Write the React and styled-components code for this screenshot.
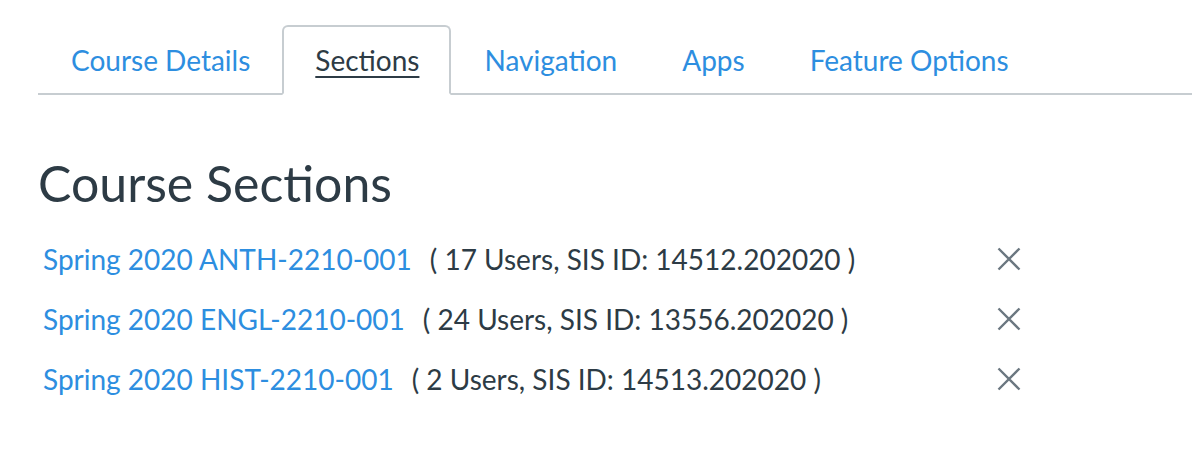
import React from "react";
import styled, { createGlobalStyle } from "styled-components";

const GlobalStyle = createGlobalStyle`
  body {
    margin: 0;
    background: #fff;
    font-family: Lato, "Noto Sans", sans-serif;
  }
`;

const Page = styled.div`
  padding: 25px 0 0 38px;
`;

const TabList = styled.ul`
  display: flex;
  list-style: none;
  margin: 0;
  padding: 0;
  border-bottom: 2px solid #c7cdd1;
`;

const Tab = styled.li`
  height: 70px;
  display: flex;
  align-items: center;
  padding: 0 30px 0 31px;
  margin-bottom: -2px;
  font-size: 28px;
  color: ${(p) => (p.$active ? "#2d3b45" : "#2d8ee0")};
  text-decoration: ${(p) => (p.$active ? "underline" : "none")};
  text-underline-offset: 5px;
  text-decoration-thickness: 2px;
  border: 2px solid ${(p) => (p.$active ? "#c7cdd1" : "transparent")};
  border-bottom-color: ${(p) => (p.$active ? "#fff" : "transparent")};
  border-radius: 6px 6px 0 0;
  background: ${(p) => (p.$active ? "#fff" : "transparent")};
  box-sizing: border-box;
`;

const Heading = styled.h1`
  margin: 58px 0 0;
  font-size: 50px;
  font-weight: 400;
  color: #2d3b45;
  line-height: 1.2;
`;

const SectionList = styled.ul`
  list-style: none;
  margin: 16px 0 0;
  padding: 0 0 0 5px;
  width: 978px;
`;

const Row = styled.li`
  display: flex;
  align-items: center;
  height: 60px;
  font-size: 28px;
`;

const SectionLink = styled.a`
  color: #2d8ee0;
  text-decoration: none;
`;

const Meta = styled.span`
  color: #2d3b45;
  margin-left: 18px;
  flex: 1;
`;

const RemoveButton = styled.button`
  border: none;
  background: none;
  padding: 0;
  display: flex;
  color: #6b7780;
  cursor: pointer;
`;

const sections = [
  { name: "Spring 2020 ANTH-2210-001", users: 17, sis: "14512.202020" },
  { name: "Spring 2020 ENGL-2210-001", users: 24, sis: "13556.202020" },
  { name: "Spring 2020 HIST-2210-001", users: 2, sis: "14513.202020" },
];

const tabs = ["Course Details", "Sections", "Navigation", "Apps", "Feature Options"];

const CloseIcon = () => (
  <svg width="24" height="24" viewBox="0 0 24 24" fill="none">
    <path d="M1.5 1.5L22.5 22.5M22.5 1.5L1.5 22.5" stroke="currentColor" strokeWidth="2.4" />
  </svg>
);

export default function App() {
  return (
    <Page>
      <GlobalStyle />
      <TabList>
        {tabs.map((t) => (
          <Tab key={t} $active={t === "Sections"}>
            {t}
          </Tab>
        ))}
      </TabList>
      <Heading>Course Sections</Heading>
      <SectionList>
        {sections.map((s) => (
          <Row key={s.name}>
            <SectionLink href="#">{s.name}</SectionLink>
            <Meta>
              ( {s.users} Users, SIS ID: {s.sis} )
            </Meta>
            <RemoveButton aria-label="Remove">
              <CloseIcon />
            </RemoveButton>
          </Row>
        ))}
      </SectionList>
    </Page>
  );
}
